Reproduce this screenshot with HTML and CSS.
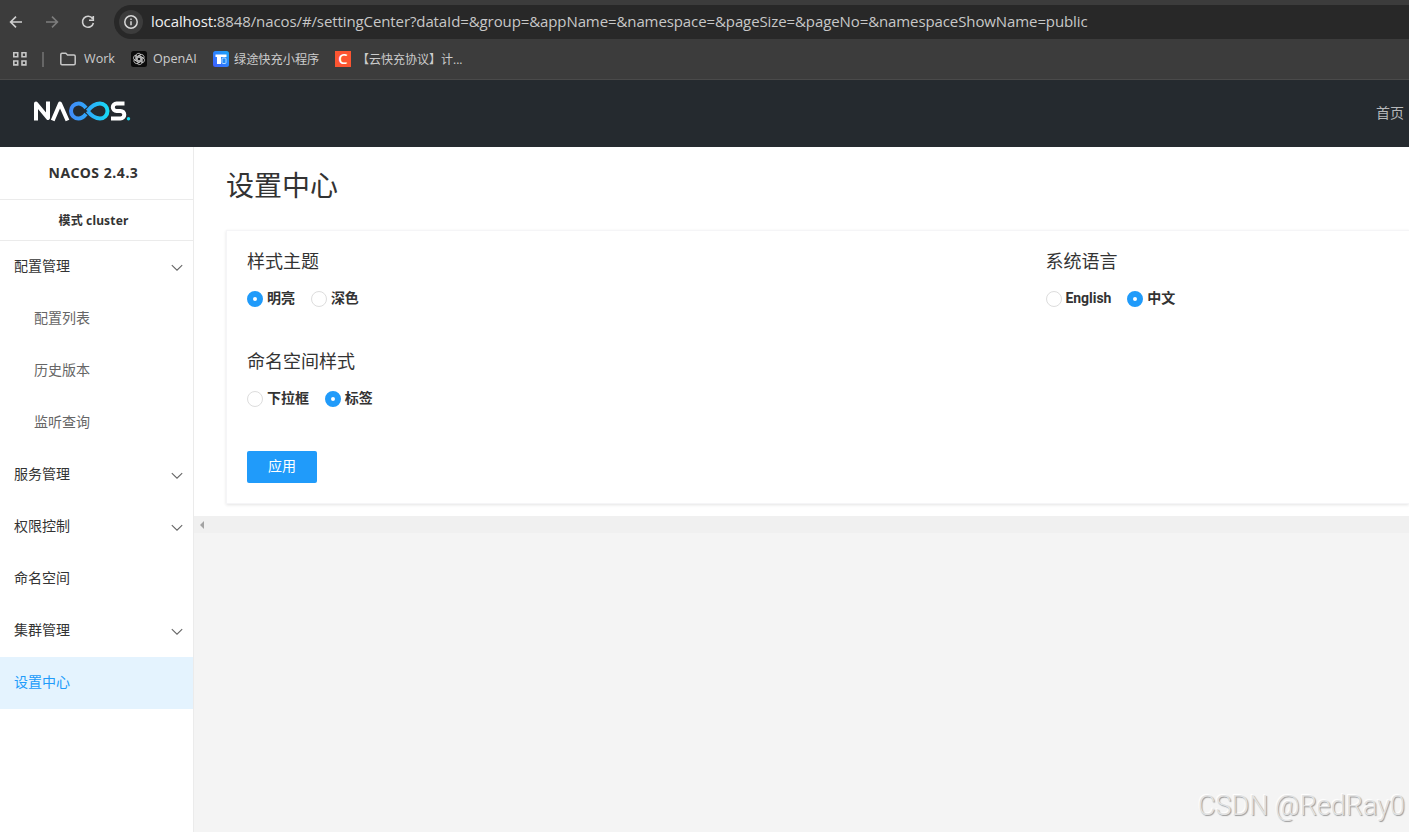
FILE: index.html
```html
<!DOCTYPE html>
<html lang="zh-CN">
<head>
<meta charset="utf-8">
<title>Nacos</title>
<link rel="stylesheet" href="styles.css">
</head>
<body>
<div class="browser">
  <div class="toolbar">
    <svg class="nav-icon" viewBox="0 0 16 16"><path d="M14 8H3M8 2.6 2.6 8 8 13.400" /></svg>
    <svg class="nav-icon dim" viewBox="0 0 16 16"><path d="M2 8h11M8 2.600 13.400 8 8 13.400" /></svg>
    <svg class="nav-icon" viewBox="0 0 16 16"><path d="M12.600 4.700A5.500 5.500 0 1 0 13.400 9M13.300 2v4.200H9" /></svg>
    <div class="address">
      <span class="info"><svg viewBox="0 0 16 16"><circle cx="8" cy="8" r="6.200"/><path d="M8 7.300v4M8 4.500v1.500"/></svg></span>
      <span class="url"><b>localhost:</b>8848/nacos/#/settingCenter?dataId=&amp;group=&amp;appName=&amp;namespace=&amp;pageSize=&amp;pageNo=&amp;namespaceShowName=public</span>
    </div>
  </div>
  <div class="bookmarks">
    <svg class="apps" viewBox="0 0 16 16"><path d="M1.800 1.800h3.900v3.900H1.800zM10 1.800h3.900v3.900H10zM1.800 10h3.900v3.900H1.800zM10 10h3.900v3.900H10z"/></svg>
    <span class="divider"></span>
    <a class="bookmark work"><svg class="folder" viewBox="0 0 16 14"><path d="M.8 11.500V2.500Q.8 1.300 2 1.300h3.800L7.600 3H14q1.200 0 1.200 1.200v7.300q0 1.200-1.200 1.200H2q-1.200 0-1.200-1.200z"/></svg><span>Work</span></a>
    <a class="bookmark openai"><svg class="favicon" viewBox="0 0 16 16"><rect width="16" height="16" rx="2.500" fill="#0b0b0b"/><g fill="none" stroke="#d5d5d5" stroke-width=".75"><path id="petal" d="M4.900 9.300V4.900a2.700 2.700 0 0 1 5-1.300L6.300 5.700v4.300"/><use href="#petal" transform="rotate(60 8 8)"/><use href="#petal" transform="rotate(120 8 8)"/><use href="#petal" transform="rotate(180 8 8)"/><use href="#petal" transform="rotate(240 8 8)"/><use href="#petal" transform="rotate(300 8 8)"/></g></svg><span>OpenAI</span></a>
    <a class="bookmark charge"><svg class="favicon" viewBox="0 0 16 16"><defs><linearGradient id="blue" x1="0" y1="1" x2="1" y2="0"><stop stop-color="#405cff"/><stop offset="1" stop-color="#18a8fa"/></linearGradient></defs><rect width="16" height="16" rx="2.500" fill="url(#blue)"/><path d="M2.500 3.500h11V6H8v7H4V6H2.500z" fill="#fff"/><rect x="9" y="7" width="4" height="5.500" rx="1" fill="#238bf7" stroke="#c5e5ff" stroke-width=".9"/></svg><span>绿途快充小程序</span></a>
    <a class="bookmark csdn"><i>C</i><span>【云快充协议】计...</span></a>
  </div>
</div>
<header class="site-header">
  <svg class="logo" viewBox="0 0 98 22">
    <defs><linearGradient id="loop" gradientUnits="userSpaceOnUse" x1="36" y1="0" x2="76" y2="0"><stop stop-color="#4389f8"/><stop offset=".5" stop-color="#2eaafb"/><stop offset="1" stop-color="#16ddf5"/></linearGradient></defs>
    <g fill="none" stroke-width="4" stroke-linejoin="round">
      <path d="M3 20.500V3.400L15 18V1.500" stroke="#fff"/>
      <path d="M19.700 20.500 27 3.500 34.500 20.500" stroke="#fff"/>
      <path d="M53 8C50.500 4.800 48 3.500 45.500 3.500a7.500 7.500 0 0 0 0 15c2.800 0 5-1.300 7.500-4.500M54.500 11C58.500 6 62 3.500 67 3.500a7.500 7.500 0 0 1 0 15C62 18.500 58.500 16 54.500 11" stroke="url(#loop)"/>
      <path d="M91.500 3.500H83.500a3.700 3.700 0 0 0 0 7.400h4a3.700 3.700 0 0 1 0 7.600H78" stroke="#fff"/>
    </g><circle cx="95.500" cy="18.800" r="1.700" fill="#16ddf5"/>
  </svg>
  <a>首页</a>
</header>
<div class="layout">
  <aside class="sidebar">
    <h1>NACOS 2.4.3</h1>
    <h2>模式 cluster</h2>
    <nav>
      <a>配置管理<svg viewBox="0 0 12 8"><path d="m.8 1.200 5.200 5 5.200-5"/></svg></a>
      <a class="child">配置列表</a>
      <a class="child">历史版本</a>
      <a class="child">监听查询</a>
      <a>服务管理<svg viewBox="0 0 12 8"><path d="m.8 1.200 5.200 5 5.200-5"/></svg></a>
      <a>权限控制<svg viewBox="0 0 12 8"><path d="m.8 1.200 5.200 5 5.200-5"/></svg></a>
      <a>命名空间</a>
      <a>集群管理<svg viewBox="0 0 12 8"><path d="m.8 1.200 5.200 5 5.200-5"/></svg></a>
      <a class="active">设置中心</a>
    </nav>
  </aside>
  <main class="main">
    <section class="content">
      <h1>设置中心</h1>
      <div class="card">
        <div class="settings">
          <div class="setting"><h3>样式主题</h3><div class="radios"><label><i class="radio on"></i>明亮</label><label><i class="radio"></i>深色</label></div></div>
          <div class="setting"><h3>系统语言</h3><div class="radios"><label><i class="radio"></i>English</label><label><i class="radio on"></i>中文</label></div></div>
          <div class="setting"><h3>命名空间样式</h3><div class="radios"><label><i class="radio"></i>下拉框</label><label><i class="radio on"></i>标签</label></div></div>
        </div>
        <button class="apply">应用</button>
      </div>
    </section>
    <div class="scrollbar"><i></i></div>
  </main>
</div>
<div class="watermark">CSDN @RedRay0</div>
</body>
</html>
```
FILE: styles.css
```css
* { box-sizing: border-box; }
body { margin: 0; height: 832px; overflow: hidden; display: flex; flex-direction: column; color: #333; background: #f4f4f4; font: 14px/20px "Noto Sans", "Noto Sans CJK SC", sans-serif; }
h1, h2, h3 { margin: 0; }
svg { display: block; flex: none; }
i { font-style: normal; }
.browser { height: 80px; flex: none; padding-top: 5px; background: #3c3c3c; border-bottom: 1px solid #4a4a4a; }
.toolbar { height: 34px; display: flex; align-items: center; padding-left: 8px; }
.nav-icon { width: 16px; height: 16px; margin-right: 20px; fill: none; stroke: #d0d0d0; stroke-width: 1.6; }
.nav-icon.dim { stroke: #7d7d7d; }
.address { flex: 1; height: 34px; margin-left: -2px; display: flex; align-items: center; gap: 8px; padding-left: 5px; border-radius: 17px 0 0 17px; background: #282828; }
.info { width: 24px; height: 24px; display: grid; place-items: center; border-radius: 50%; background: #3c3c3c; }
.info svg { width: 16px; height: 16px; fill: none; stroke: #d8d8d8; stroke-width: 1.5; }
.url { padding-bottom: 2px; color: #c7c7c7; font: 15px/20px "Open Sans", sans-serif; letter-spacing: -.1px; white-space: nowrap; }
.url b { font-weight: 400; color: #f0f0f0; }
.bookmarks { height: 40px; display: flex; align-items: center; padding-left: 12px; color: #ccc; font: 12.600px/20px "Open Sans", "Noto Sans CJK SC", sans-serif; white-space: nowrap; }
.apps { width: 16px; height: 16px; fill: none; stroke: #c7c7c7; stroke-width: 1.6; }
.divider { width: 2px; height: 15px; margin: 0 16px 0 14px; background: #666; }
.bookmark { display: flex; align-items: center; }
.folder { width: 16px; height: 14px; fill: none; stroke: #c7c7c7; stroke-width: 1.5; }
.work { width: 71px; gap: 8px; }
.favicon { width: 16px; height: 16px; }
.openai { width: 82px; gap: 6px; }
.charge { width: 122px; gap: 5px; }
.charge span { padding-top: 2px; font-size: 12.200px; }
.csdn { gap: 6px; }
.csdn i { width: 16px; height: 16px; display: grid; place-items: center; color: #fff; background: #fc5531; font: 600 15px/14px "Open Sans", sans-serif; padding-bottom: 2px; }
.csdn span { padding-top: 2px; font-size: 12px; }
.site-header { height: 67px; flex: none; display: flex; justify-content: space-between; align-items: center; padding: 0 5px 2px 33px; background: #252a2f; color: #b6b8ba; }
.logo { width: 98px; height: 22px; margin-bottom: 3px; }
.layout { flex: 1; min-height: 0; display: flex; }
.sidebar { width: 194px; flex: none; background: #fff; border-right: 1px solid #ebebeb; }
.sidebar h1, .sidebar h2 { padding-right: 6px; border-bottom: 1px solid #ebebeb; text-align: center; }
.sidebar h1 { height: 53px; font: 700 14px/52px "Noto Sans", sans-serif; letter-spacing: .55px; }
.sidebar h2 { height: 41px; font: 700 12px/42px "Noto Sans", "Noto Sans CJK SC", sans-serif; letter-spacing: .15px; }
nav a { height: 52px; padding: 0 10px 2px 14px; display: flex; align-items: center; justify-content: space-between; }
nav svg { width: 12px; height: 8px; margin-top: 3px; fill: none; stroke: #666; stroke-width: 1.1; }
nav .child { padding-left: 34px; color: #666; }
nav .active { color: #209bfa; background: #e4f3fe; }
.main { flex: 1; min-width: 0; }
.content { height: 369px; padding: 18px 0 0 32px; background: #fff; }
.content > h1 { height: 65px; font-size: 28px; line-height: 40px; font-weight: 400; }
.card { height: 274px; padding: 19px 0 20px 20px; border: 1px solid #f5f5f7; border-right: 0; box-shadow: 0 1px 3px #0000001c; }
.settings { display: grid; grid-template-columns: 798.500px 1fr; }
.setting { height: 100px; }
.setting h3 { font-size: 18px; line-height: 22px; font-weight: 400; }
.radios { display: flex; gap: 16px; margin-top: 16px; }
.radios label { display: flex; gap: 4px; align-items: center; font: 700 14px/20px Roboto, "Noto Sans CJK SC", sans-serif; letter-spacing: -.05px; }
.radio { width: 16px; height: 16px; margin-top: 2px; border: 1px solid #ddd; border-radius: 50%; background: #fff; }
.radio.on { border: 6px solid #209bfa; }
.apply { display: block; width: 70px; height: 32px; margin-top: 1px; padding: 0 0 3px; border: 0; border-radius: 2px; background: #209bfa; color: #fff; font: 14px/19px "Noto Sans CJK SC", sans-serif; }
.scrollbar { height: 17px; padding: 5px 0 0 6px; background: #f0f0f0; }
.scrollbar i { display: block; width: 4px; height: 8px; background: #a3a3a3; clip-path: polygon(0 50%, 100% 0, 100% 100%); }
.watermark { position: absolute; right: 4px; bottom: 8px; font: 300 27px/36px Roboto, sans-serif; color: #e2e2e2; text-shadow: 1px 1px 1px #999, -1px -1px 1px #fff; white-space: nowrap; }
```
